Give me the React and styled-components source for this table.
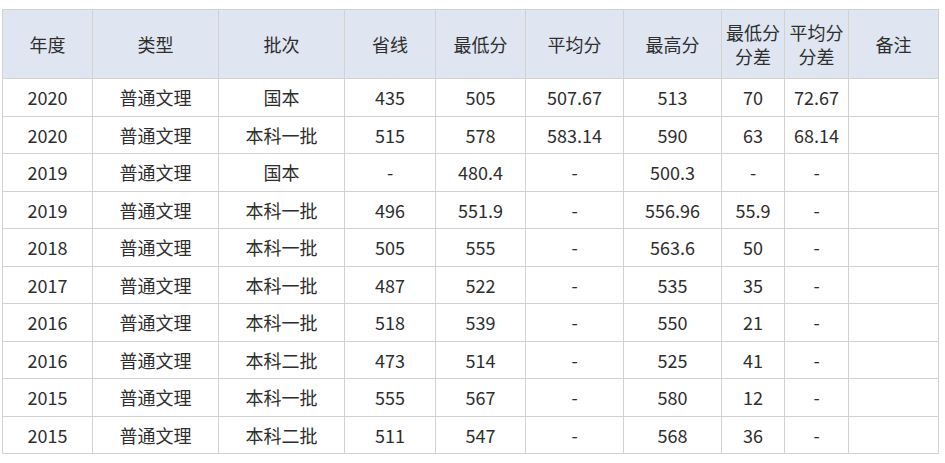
import React from 'react'
import styled, { createGlobalStyle } from 'styled-components'

const GlobalStyle = createGlobalStyle`
	body {
		margin: 0;
		background: #fff;
		font-family: "Noto Sans CJK SC", "Noto Sans", sans-serif;
		color: #333;
	}
`

const Wrapper = styled.div`
	padding: 9px 0 0 2px;
`

const Table = styled.table`
	border-collapse: collapse;
	table-layout: fixed;
	width: 937px;
	font-size: 18px;
	border: 1px solid #d2d2d2;
`

const HeadCell = styled.th`
	font-weight: normal;
	background: #dfe5f1;
	border: 1px solid #d2d2d2;
	height: 68px;
	padding: 0;
	line-height: 24px;
	text-align: center;
	vertical-align: middle;
	color: #2e2e2e;
`

const Cell = styled.td`
	border: 1px solid #d2d2d2;
	height: 36.5px;
	padding: 0;
	line-height: 24px;
	text-align: center;
	vertical-align: middle;
	color: #2e2e2e;
`

const columns = [
	{ title: '年度', width: 90 },
	{ title: '类型', width: 126 },
	{ title: '批次', width: 126 },
	{ title: '省线', width: 91 },
	{ title: '最低分', width: 90 },
	{ title: '平均分', width: 98 },
	{ title: '最高分', width: 98 },
	{ title: ['最低分', '分差'], width: 63 },
	{ title: ['平均分', '分差'], width: 64 },
	{ title: '备注', width: 90 }
]

const rows = [
	['2020', '普通文理', '国本', '435', '505', '507.67', '513', '70', '72.67', ''],
	['2020', '普通文理', '本科一批', '515', '578', '583.14', '590', '63', '68.14', ''],
	['2019', '普通文理', '国本', '-', '480.4', '-', '500.3', '-', '-', ''],
	['2019', '普通文理', '本科一批', '496', '551.9', '-', '556.96', '55.9', '-', ''],
	['2018', '普通文理', '本科一批', '505', '555', '-', '563.6', '50', '-', ''],
	['2017', '普通文理', '本科一批', '487', '522', '-', '535', '35', '-', ''],
	['2016', '普通文理', '本科一批', '518', '539', '-', '550', '21', '-', ''],
	['2016', '普通文理', '本科二批', '473', '514', '-', '525', '41', '-', ''],
	['2015', '普通文理', '本科一批', '555', '567', '-', '580', '12', '-', ''],
	['2015', '普通文理', '本科二批', '511', '547', '-', '568', '36', '-', '']
]

export default () => {
	return (
		<>
			<GlobalStyle />
			<Wrapper>
				<Table>
					<colgroup>
						{columns.map((c, i) => <col key={i} style={{ width: c.width }} />)}
					</colgroup>
					<thead>
						<tr>
							{columns.map((c, i) =>
								<HeadCell key={i}>
									{Array.isArray(c.title)
										? <>{c.title[0]}<br />{c.title[1]}</>
										: c.title}
								</HeadCell>
							)}
						</tr>
					</thead>
					<tbody>
						{rows.map((r, i) =>
							<tr key={i}>
								{r.map((v, j) => <Cell key={j}>{v}</Cell>)}
							</tr>
						)}
					</tbody>
				</Table>
			</Wrapper>
		</>
	)
}
